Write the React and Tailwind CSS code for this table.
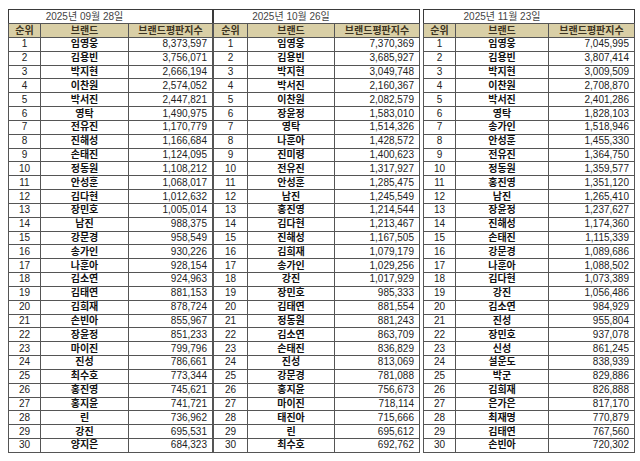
import React from "react";

const tables = [
  {
    date: "2025년 09월 28일",
    cols: ["w-[32px]", "w-[88px]", "w-[84px]"],
    rows: [
      ["임영웅", "8,373,597"],
      ["김용빈", "3,756,071"],
      ["박지현", "2,666,194"],
      ["이찬원", "2,574,052"],
      ["박서진", "2,447,821"],
      ["영탁", "1,490,975"],
      ["전유진", "1,170,779"],
      ["진해성", "1,166,684"],
      ["손태진", "1,124,095"],
      ["정동원", "1,108,212"],
      ["안성훈", "1,068,017"],
      ["김다현", "1,012,632"],
      ["장민호", "1,005,014"],
      ["남진", "988,375"],
      ["강문경", "958,549"],
      ["송가인", "930,226"],
      ["나훈아", "928,154"],
      ["김소연", "924,963"],
      ["김태연", "881,153"],
      ["김희재", "878,724"],
      ["손빈아", "855,967"],
      ["장윤정", "851,233"],
      ["마이진", "799,796"],
      ["진성", "786,661"],
      ["최수호", "773,344"],
      ["홍진영", "745,621"],
      ["홍지윤", "741,721"],
      ["린", "736,962"],
      ["강진", "695,531"],
      ["양지은", "684,323"],
    ],
  },
  {
    date: "2025년 10월 26일",
    cols: ["w-[34px]", "w-[87px]", "w-[85px]"],
    rows: [
      ["임영웅", "7,370,369"],
      ["김용빈", "3,685,927"],
      ["박지현", "3,049,748"],
      ["박서진", "2,160,367"],
      ["이찬원", "2,082,579"],
      ["장윤정", "1,583,010"],
      ["영탁", "1,514,326"],
      ["나훈아", "1,428,572"],
      ["진미령", "1,400,623"],
      ["전유진", "1,317,927"],
      ["안성훈", "1,285,475"],
      ["남진", "1,245,549"],
      ["홍진영", "1,214,544"],
      ["김다현", "1,213,467"],
      ["진해성", "1,167,505"],
      ["김희재", "1,079,179"],
      ["송가인", "1,029,256"],
      ["강진", "1,017,929"],
      ["장민호", "985,333"],
      ["김태연", "881,554"],
      ["정동원", "881,243"],
      ["김소연", "863,709"],
      ["손태진", "836,829"],
      ["진성", "813,069"],
      ["강문경", "781,088"],
      ["홍지윤", "756,673"],
      ["마이진", "718,114"],
      ["태진아", "715,666"],
      ["린", "695,612"],
      ["최수호", "692,762"],
    ],
  },
  {
    date: "2025년 11월 23일",
    cols: ["w-[32px]", "w-[93px]", "w-[86px]"],
    rows: [
      ["임영웅", "7,045,995"],
      ["김용빈", "3,807,414"],
      ["박지현", "3,009,509"],
      ["이찬원", "2,708,870"],
      ["박서진", "2,401,286"],
      ["영탁", "1,828,103"],
      ["송가인", "1,518,946"],
      ["안성훈", "1,455,330"],
      ["전유진", "1,364,750"],
      ["정동원", "1,359,577"],
      ["홍진영", "1,351,120"],
      ["남진", "1,265,410"],
      ["장윤정", "1,237,627"],
      ["진해성", "1,174,360"],
      ["손태진", "1,115,339"],
      ["강문경", "1,089,686"],
      ["나훈아", "1,088,502"],
      ["김다현", "1,073,389"],
      ["강진", "1,056,486"],
      ["김소연", "984,929"],
      ["진성", "955,804"],
      ["장민호", "937,078"],
      ["신성", "861,245"],
      ["설운도", "838,939"],
      ["박군", "829,886"],
      ["김희재", "826,888"],
      ["은가은", "817,170"],
      ["최재명", "770,879"],
      ["김태연", "767,560"],
      ["손빈아", "720,302"],
    ],
  },
];

function RankTable({ date, cols, rows }) {
  return (
    <table className="table-fixed border-collapse border border-[#3a3a3a] text-[10px] leading-none text-[#222]">
      <colgroup>
        <col className={cols[0]} />
        <col className={cols[1]} />
        <col className={cols[2]} />
      </colgroup>
      <tbody>
        <tr className="h-[14px]">
          <td></td>
          <td className="text-center text-[#444]">{date}</td>
          <td></td>
        </tr>
        <tr className="h-[14px] bg-[#d9cfa6] font-bold text-[#3d3421]">
          <td className="border border-[#555] text-center">순위</td>
          <td className="border border-[#555] text-center">브랜드</td>
          <td className="border border-[#555] text-center">브랜드평판지수</td>
        </tr>
        {rows.map(([name, score], i) => (
          <tr key={i} className="h-[13.83px]">
            <td className="border border-[#555] text-center">{i + 1}</td>
            <td className="border border-[#555] text-center font-bold text-[#111]">{name}</td>
            <td className="border border-[#555] pr-[5px] text-right">{score}</td>
          </tr>
        ))}
      </tbody>
    </table>
  );
}

export default function App() {
  return (
    <div
      className="w-[640px] h-[461px] overflow-hidden bg-white pt-[9px] pl-[8px]"
      style={{ fontFamily: '"Liberation Sans", "Noto Sans CJK KR", sans-serif' }}
    >
      <div className="flex items-start">
        <RankTable {...tables[0]} />
        <RankTable {...tables[1]} />
        <div className="ml-[3px]">
          <RankTable {...tables[2]} />
        </div>
      </div>
    </div>
  );
}
